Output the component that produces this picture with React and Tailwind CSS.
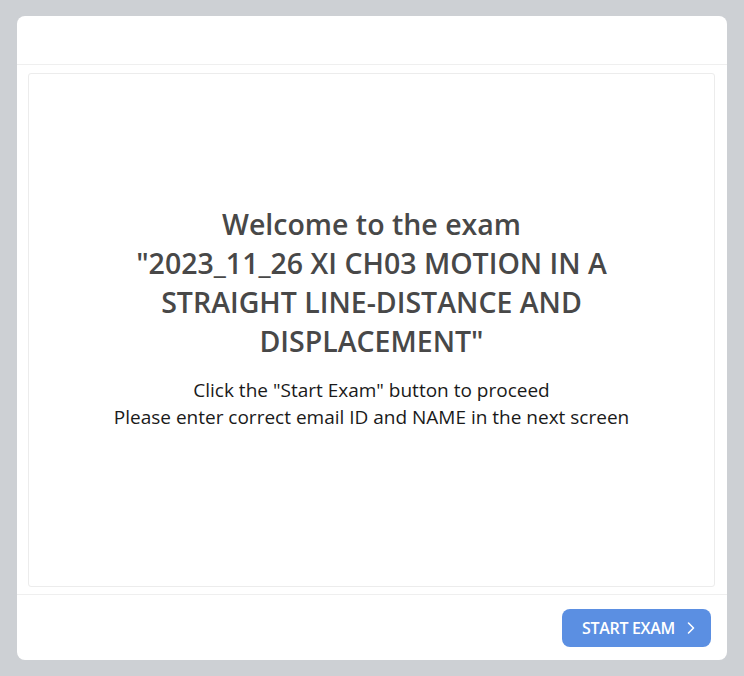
import React from 'react';

export default function App() {
  return (
    <div className="min-h-[676px] w-full bg-[#cdd0d4] px-[17px] pt-[16px] pb-[16px] font-['Open_Sans',sans-serif]">
      <div className="flex h-[644px] flex-col rounded-lg bg-white">
        {/* header */}
        <div className="h-[49px] border-b border-[#efefef]" />

        {/* content */}
        <div className="flex flex-1 pl-[11px] pr-[12px] pt-[8px] pb-[7px]">
          <div className="flex flex-1 flex-col items-center justify-center rounded-[3px] border border-[#ececec] pb-[24px]">
            <h1 className="max-w-[560px] text-center text-[28.5px] font-semibold leading-[39px] text-[#484848]">
              Welcome to the exam
              <br />
              "2023_11_26 XI CH03 MOTION IN A STRAIGHT LINE-DISTANCE AND DISPLACEMENT"
            </h1>
            <p className="mt-[16px] text-center text-[19px] leading-[27px] text-[#1a1a1a]">
              Click the "Start Exam" button to proceed
              <br />
              Please enter correct email ID and NAME in the next screen
            </p>
          </div>
        </div>

        {/* footer */}
        <div className="flex h-[66px] items-center justify-end border-t border-[#efefef] px-[16px]">
          <button className="flex h-[38px] items-center gap-[11px] rounded-lg bg-[#5b8fe2] pl-[20px] pr-[15px] text-[16px] font-semibold tracking-[-0.3px] text-white">
            START EXAM
            <svg width="10" height="14" viewBox="0 0 10 14" fill="none">
              <path d="M2.5 2 L7.5 7 L2.5 12" stroke="white" strokeWidth="1.6" strokeLinecap="round" strokeLinejoin="round" />
            </svg>
          </button>
        </div>
      </div>
    </div>
  );
}
